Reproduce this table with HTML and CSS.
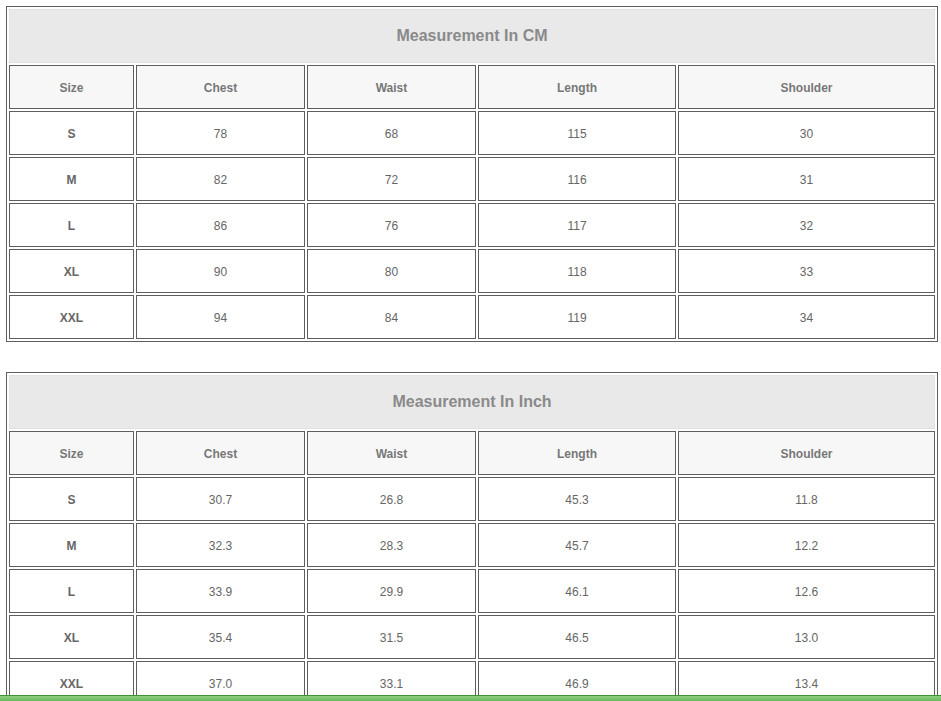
FILE: index.html
```html
<!DOCTYPE html>
<html>
<head>
<meta charset="utf-8">
<link rel="stylesheet" href="styles.css">
</head>
<body>
<div class="page">
  <table class="size-table">
    <colgroup><col class="c-size"><col class="c-chest"><col class="c-waist"><col class="c-length"><col class="c-shoulder"></colgroup>
    <tr><th class="title" colspan="5">Measurement In CM</th></tr>
    <tr class="head">
      <th>Size</th><th>Chest</th><th>Waist</th><th>Length</th><th>Shoulder</th>
    </tr>
    <tr><td class="sz">S</td><td>78</td><td>68</td><td>115</td><td>30</td></tr>
    <tr><td class="sz">M</td><td>82</td><td>72</td><td>116</td><td>31</td></tr>
    <tr><td class="sz">L</td><td>86</td><td>76</td><td>117</td><td>32</td></tr>
    <tr><td class="sz">XL</td><td>90</td><td>80</td><td>118</td><td>33</td></tr>
    <tr><td class="sz">XXL</td><td>94</td><td>84</td><td>119</td><td>34</td></tr>
  </table>
  <table class="size-table">
    <colgroup><col class="c-size"><col class="c-chest"><col class="c-waist"><col class="c-length"><col class="c-shoulder"></colgroup>
    <tr><th class="title" colspan="5">Measurement In Inch</th></tr>
    <tr class="head">
      <th>Size</th><th>Chest</th><th>Waist</th><th>Length</th><th>Shoulder</th>
    </tr>
    <tr><td class="sz">S</td><td>30.7</td><td>26.8</td><td>45.3</td><td>11.8</td></tr>
    <tr><td class="sz">M</td><td>32.3</td><td>28.3</td><td>45.7</td><td>12.2</td></tr>
    <tr><td class="sz">L</td><td>33.9</td><td>29.9</td><td>46.1</td><td>12.6</td></tr>
    <tr><td class="sz">XL</td><td>35.4</td><td>31.5</td><td>46.5</td><td>13.0</td></tr>
    <tr><td class="sz">XXL</td><td>37.0</td><td>33.1</td><td>46.9</td><td>13.4</td></tr>
  </table>
</div>
<div class="bottom-bar"></div>
</body>
</html>
```
FILE: styles.css
```css
html, body {
  margin: 0;
  padding: 0;
  background: #ffffff;
}
body {
  font-family: "Liberation Sans", Arial, sans-serif;
  overflow: hidden;
}
.page {
  padding: 6px 0 0 6px;
  display: flex;
  flex-direction: column;
  gap: 30px;
}
.size-table {
  width: 932px;
  table-layout: fixed;
  border-collapse: separate;
  border-spacing: 2px;
  border: 1px solid #5e5e5e;
  box-sizing: border-box;
}
.size-table th,
.size-table td {
  box-sizing: border-box;
  border: 1px solid #5e5e5e;
  text-align: center;
  vertical-align: middle;
  padding: 2px 0 0;
  height: 44px;
  font-size: 12px;
  color: #666666;
}
.size-table th.title {
  height: 54px;
  padding: 0;
  border: 1px solid #e2e2e2;
  background: #e9e9e9;
  font-size: 16px;
  font-weight: bold;
  color: #8a8a8a;
}
.head th {
  background: #f7f7f7;
  font-weight: bold;
  color: #777777;
}
td.sz {
  font-weight: bold;
  color: #666666;
}
.c-size { width: 125px; }
.c-chest { width: 169px; }
.c-waist { width: 169px; }
.c-length { width: 198px; }
.c-shoulder { width: 257px; }
.bottom-bar {
  position: fixed;
  left: 0;
  right: 0;
  bottom: 0;
  height: 5px;
  border-top: 1px solid #3f8f36;
  background: linear-gradient(#8ccf7e, #6ab95c);
}
```
